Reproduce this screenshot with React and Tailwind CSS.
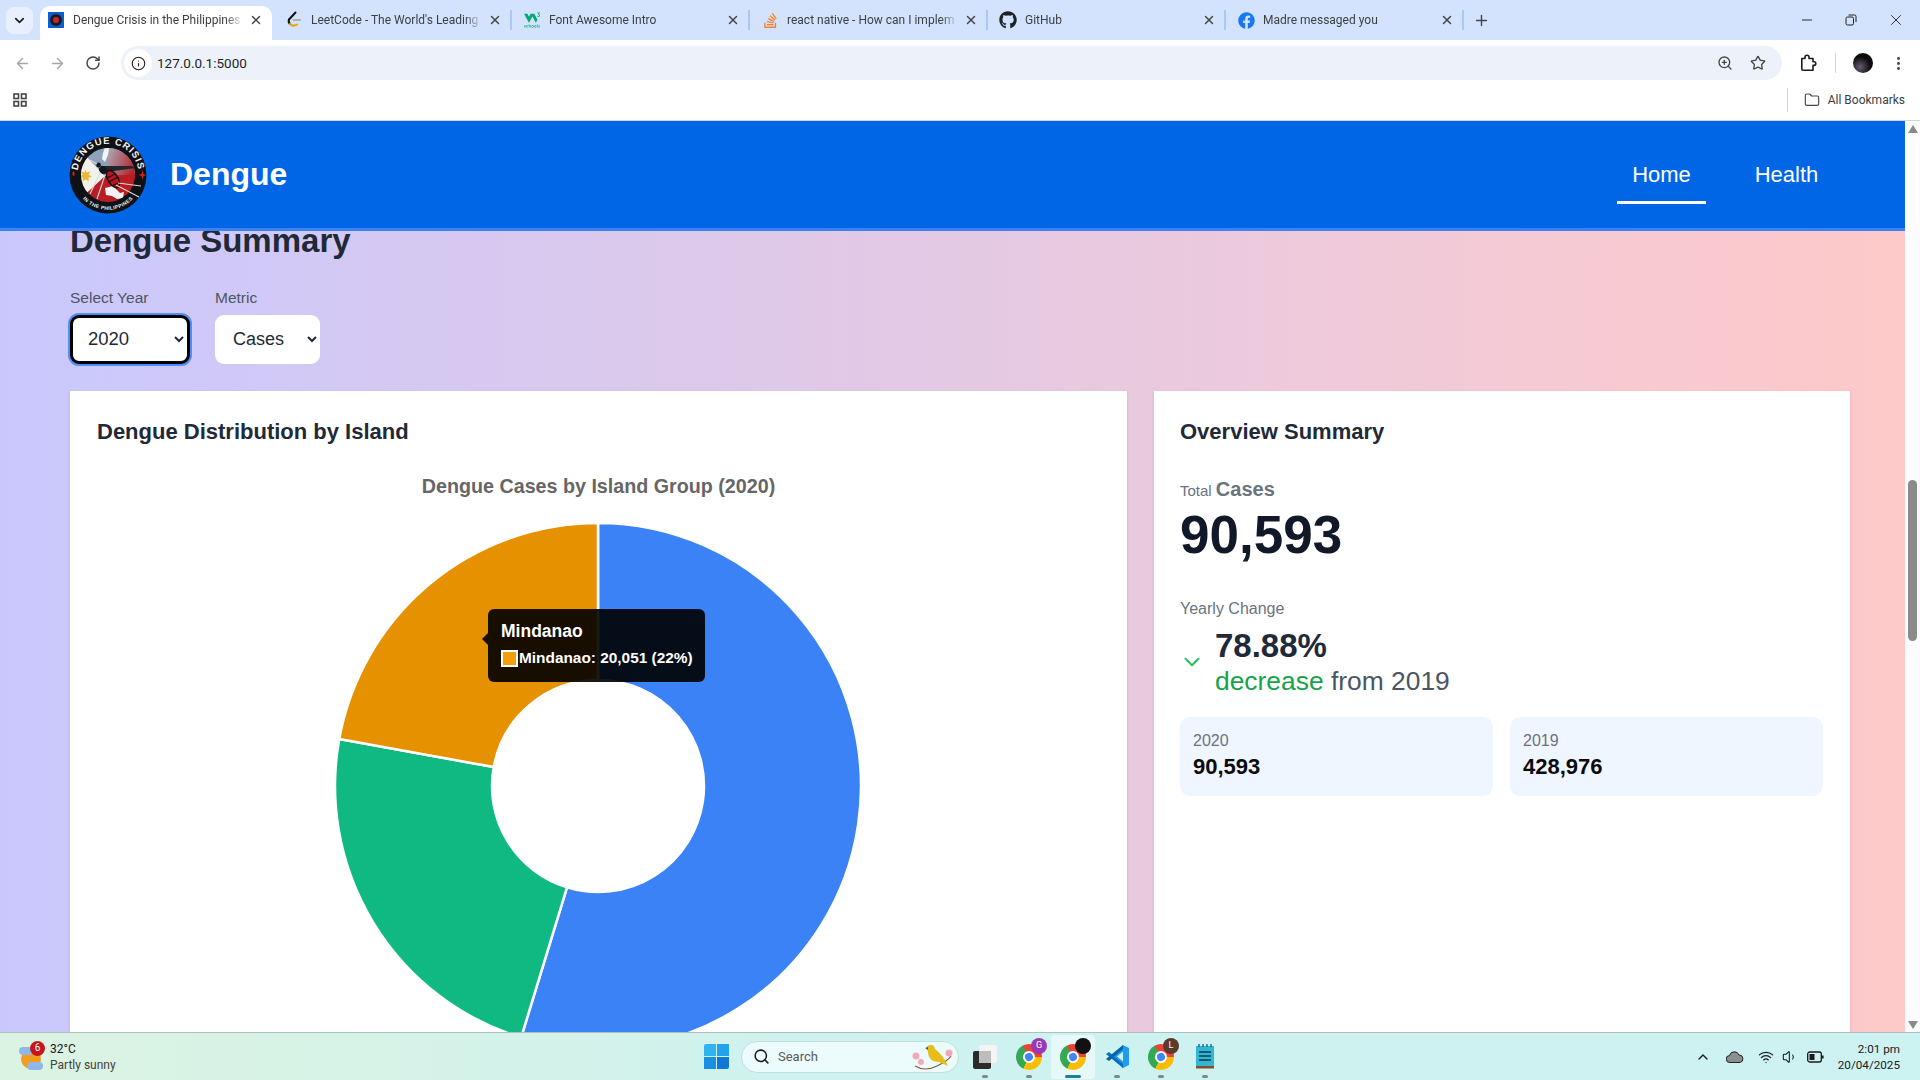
import React from 'react';
import {
  ArrowLeft, ArrowRight, RotateCw, Info, ZoomIn, Star, EllipsisVertical, Folder,
  X, Plus, Minus, ChevronDown, ChevronUp, Search, Wifi, Volume1,
} from 'lucide-react';
import { FaGithub, FaFacebook, FaStackOverflow } from 'react-icons/fa';
import { SiW3Schools } from 'react-icons/si';

const UI_FONT = "font-['Roboto','Noto_Sans',sans-serif]";
const PAGE_FONT = "font-['Liberation_Sans',Arial,sans-serif]";

function LeetIcon() {
  return (
    <svg width="16" height="18" viewBox="0 0 16 18" fill="none" strokeWidth="2" strokeLinecap="round">
      <path d="M9.5 1.5 L3 8.5" stroke="#111" />
      <path d="M3 8.5 Q2 11 4 13" stroke="#111" />
      <path d="M4 13 Q7 16 11 13.5" stroke="#f2a100" />
      <path d="M7.5 9 H14" stroke="#b3b1b0" />
    </svg>
  );
}

function Favicon() {
  return (
    <div className="w-4 h-4 bg-[#0a5fd6] flex items-center justify-center">
      <div className="w-3 h-3 rounded-full bg-[#1c1c1c] flex items-center justify-center">
        <div className="w-1.5 h-1.5 rounded-full bg-[#c1272d]" />
      </div>
    </div>
  );
}

const tabs = [
  { icon: <Favicon />, title: 'Dengue Crisis in the Philippines', active: true },
  { icon: <LeetIcon />, title: "LeetCode - The World's Leading" },
  { icon: <SiW3Schools size={16} className="text-[#04aa6d]" />, title: 'Font Awesome Intro' },
  { icon: <FaStackOverflow size={17} className="text-[#f48024]" />, title: 'react native - How can I implem' },
  { icon: <FaGithub size={18} className="text-[#1f2328]" />, title: 'GitHub' },
  { icon: <FaFacebook size={17} className="text-[#1877f2]" />, title: 'Madre messaged you' },
];

function Tab({ icon, title, active }) {
  return (
    <div className={`h-[34px] shrink-0 flex items-center pl-[7px] pb-[6px] rounded-t-[10px] ${active ? 'w-[232px] mr-[6px] pr-[9px] bg-white' : 'w-[238px] pr-[4px]'}`}>
      <div className="w-[18px] flex justify-center shrink-0">{icon}</div>
      <span className="ml-[8px] flex-1 min-w-0 whitespace-nowrap overflow-hidden text-[12px] text-[#3c4043] [mask-image:linear-gradient(to_right,black_90%,transparent)]">
        {title}
      </span>
      <X size={14} strokeWidth={2.5} className="ml-[6px] shrink-0 text-[#444746]" />
      {!active && <div className="w-[2px] h-[20px] bg-[#a8c7fa] ml-[8px] shrink-0" />}
    </div>
  );
}

function TabStrip() {
  return (
    <div className="h-[40px] bg-[#d3e3fd] flex items-end">
      <div className="w-[27px] h-[27px] ml-[6px] mb-[6px] mr-[7px] rounded-[8px] bg-[#e9f0fd] flex items-center justify-center shrink-0">
        <ChevronDown size={15} strokeWidth={2.8} className="text-[#1f1f1f]" />
      </div>
      {tabs.map((t) => (
        <Tab key={t.title} {...t} />
      ))}
      <Plus size={17} strokeWidth={2} className="ml-[5px] mb-[11px] text-[#444746] shrink-0" />
      <div className="flex-1" />
      <div className="flex items-center gap-[30px] pr-[15px] mb-[11px] text-[#1f1f1f]">
        <Minus size={16} strokeWidth={1.4} />
        <RestoreIcon />
        <X size={18} strokeWidth={1.2} />
      </div>
    </div>
  );
}

function RestoreIcon() {
  return (
    <svg width="12" height="12" viewBox="0 0 12 12" fill="none" stroke="#1f1f1f" strokeWidth="1">
      <rect x="1" y="3" width="7.5" height="8" rx="1.5" />
      <path d="M3.5 1 H9.5 Q11 1 11 2.5 V8" />
    </svg>
  );
}

function ExtensionIcon() {
  return (
    <svg className="ml-[18px]" width="17" height="18" viewBox="0 0 17 18" fill="none" stroke="#1f1f1f" strokeWidth="1.6" strokeLinejoin="round">
      <path d="M1.8 4.5 H5 V3.2 a2 2 0 0 1 4 0 V4.5 H13 V7.8 H14 a1.8 1.8 0 0 1 0 3.6 H13 V16.2 H3 Q1.8 16.2 1.8 15 Z" />
    </svg>
  );
}

function Toolbar() {
  return (
    <div className="h-[40px] pt-[6px] bg-white flex items-center">
      <ArrowLeft size={17} className="ml-[14px] text-[#a3a5a8]" />
      <ArrowRight size={17} className="ml-[18px] text-[#a3a5a8]" />
      <RotateCw size={16} strokeWidth={2.2} className="ml-[19px] text-[#444746]" />
      <div className="ml-[20px] w-[1661px] h-[34px] rounded-full bg-[#edf2fa] flex items-center">
        <div className="ml-[3px] w-[28px] h-[28px] rounded-full bg-white flex items-center justify-center">
          <Info size={15} strokeWidth={1.8} className="text-[#1f1f1f]" />
        </div>
        <span className="ml-[5px] text-[13.5px] text-[#1f1f1f]">127.0.0.1:5000</span>
        <div className="flex-1" />
        <ZoomIn size={16} strokeWidth={2} className="text-[#444746]" />
        <Star size={16} strokeWidth={2} className="ml-[17px] mr-[16px] text-[#444746]" />
      </div>
      <ExtensionIcon />
      <div className="ml-[18px] w-[1px] h-[20px] bg-[#c7d7f0]" />
      <div className="ml-[17px] w-[20px] h-[20px] rounded-full bg-[radial-gradient(circle_at_35%_70%,#6b5a78,#0a0a0a_55%)]" />
      <EllipsisVertical size={17} strokeWidth={2.2} className="ml-[17px] text-[#444746]" />
    </div>
  );
}

function BookmarksBar() {
  return (
    <div className="h-[41px] bg-white flex items-center border-b border-[#d3d3d3] pb-[1px]">
      <AppsIcon />
      <div className="flex-1" />
      <div className="w-[1px] h-[24px] bg-[#c7d7f0]" />
      <Folder size={16} strokeWidth={1.7} className="ml-[16px] text-[#444746]" />
      <span className="ml-[8px] mr-[15px] text-[12px] text-[#3c4043]">All Bookmarks</span>
    </div>
  );
}

function AppsIcon() {
  return (
    <svg className="ml-[13px]" width="14" height="14" viewBox="0 0 14 14" fill="none" stroke="#444746" strokeWidth="1.6">
      <rect x="1" y="1" width="4.5" height="4.5" />
      <rect x="8.5" y="1" width="4.5" height="4.5" />
      <rect x="1" y="8.5" width="4.5" height="4.5" />
      <rect x="8.5" y="8.5" width="4.5" height="4.5" />
    </svg>
  );
}

function Logo() {
  return (
    <svg width="78" height="78" viewBox="0 0 78 78" className="shrink-0">
      <defs>
        <path id="logoTop" d="M9.5 46 A30.5 30.5 0 1 1 68.5 46" />
        <path id="logoBottom" d="M6 48 A34 34 0 0 0 72 48" />
        <clipPath id="logoInner"><circle cx="39" cy="39" r="27" /></clipPath>
        <linearGradient id="logoRed" x1="0" y1="0" x2="1" y2="0.4">
          <stop offset="0" stopColor="#a9aebb" />
          <stop offset="1" stopColor="#b5242c" />
        </linearGradient>
      </defs>
      <circle cx="39" cy="39" r="38.5" fill="#0e1216" />
      <g clipPath="url(#logoInner)">
        <rect x="10" y="10" width="58" height="30" fill="#8fa2bb" />
        <rect x="39" y="10" width="30" height="32" fill="url(#logoRed)" />
        <path d="M8 42 L70 38 V70 H8 Z" fill="#b91c22" />
        <path d="M10 13 L36 40 L10 64 Z" fill="#f1f1ee" />
        <path d="M16 33 l1.6 3.4 3.6 -1 -1.4 3.4 3.2 2 -3.6 1 0.4 3.8 -3.2 -2.4 -3 2.4 0.4 -3.8 -3.4 -1.2 3 -1.8 -1.2 -3.4 3.4 1.2 Z" fill="#e8b92e" />
        <path d="M36 11 l4 1 -1 7 -3 7 -3 -3 1 -6 Z" fill="#f4f4f4" />
        <path d="M36 52 l8 -2 7 7 4 -1 -1 6 -6 1 -5 -3 -6 -1 Z" fill="#f4f4f4" />
      </g>
      <path d="M33 30 L63 30 L66 32 L38 36 Z" fill="#20262c" />
      <ellipse cx="44" cy="43" rx="5" ry="9.5" transform="rotate(-32 44 43)" fill="#c1121f" stroke="#111" strokeWidth="1.4" />
      <path d="M38 42 L46 38 M40 46 L49 41 M43 50 L51 46" stroke="#111" strokeWidth="1.2" />
      <ellipse cx="34" cy="34" rx="3.6" ry="4.4" transform="rotate(-40 34 34)" fill="#15181b" />
      <circle cx="29.5" cy="29" r="2.4" fill="#15181b" />
      <path d="M31 37 L21 58 M36 39 L28 63 M47 49 L70 61 M49 47 L72 50 M28 28 L21 24" stroke="#d8d8d8" strokeWidth="1.1" fill="none" />
      <path d="M4.5 35 q-2.4 3.6 0 5 q2.4 -1.4 0 -5 Z" fill="#d2222a" />
      <path d="M73.5 34 l1 4 3 1 -3 1 -1 4 -1 -4 -3 -1 3 -1 Z" fill="#d2222a" />
      <text fontSize="9.5" fontWeight="700" fill="#f4f4f4" letterSpacing="1" className={PAGE_FONT}>
        <textPath href="#logoTop" startOffset="50%" textAnchor="middle">DENGUE CRISIS</textPath>
      </text>
      <text fontSize="5" fontWeight="700" fill="#f4f4f4" letterSpacing="0.4" className={PAGE_FONT}>
        <textPath href="#logoBottom" startOffset="50%" textAnchor="middle">IN THE PHILIPPINES</textPath>
      </text>
    </svg>
  );
}

function SiteHeader() {
  return (
    <header className="relative z-10 h-[110px] shrink-0 bg-[#0066e6] border-b-[3px] border-[#3b82f6] flex items-center pl-[69px] pr-[78px]">
      <Logo />
      <span className="ml-[23px] mb-[2px] text-[32px] font-bold text-white">Dengue</span>
      <div className="flex-1" />
      <nav className="flex items-center gap-[40px] text-[22px] text-white">
        <span className="w-[89px] text-center pt-[12px] pb-[10px] border-b-[3px] border-white font-medium">Home</span>
        <span className="pt-[12px] pb-[13px] w-[81px] text-center font-medium">Health</span>
      </nav>
    </header>
  );
}

function Field({ label, value, options, width, focused }) {
  return (
    <div className="flex flex-col">
      <label className="text-[15.5px] leading-[20px] text-[#4b5563] mb-[7px]">{label}</label>
      <select
        defaultValue={value}
        className={`${width} h-[49px] pr-[2px] pb-[2px] text-[#1f2937] bg-white rounded-[9px] ${focused ? 'text-[18.5px] pl-[11px] border-[3px] border-black ring-2 ring-[#4f8ef7]' : 'text-[18px] pl-[14px]'}`}
      >
        {options.map((o) => (
          <option key={o}>{o}</option>
        ))}
      </select>
    </div>
  );
}

function arcPath(cx, cy, r0, r1, a0, a1) {
  const p = (r, a) => {
    const t = ((a - 90) * Math.PI) / 180;
    return `${(cx + r * Math.cos(t)).toFixed(2)} ${(cy + r * Math.sin(t)).toFixed(2)}`;
  };
  const large = a1 - a0 > 180 ? 1 : 0;
  return `M${p(r1, a0)} A${r1} ${r1} 0 ${large} 1 ${p(r1, a1)} L${p(r0, a1)} A${r0} ${r0} 0 ${large} 0 ${p(r0, a0)} Z`;
}

const slices = [
  { color: '#3b82f6', from: 0, to: 197 },
  { color: '#10b981', from: 197, to: 280.3 },
  { color: '#e69100', from: 280.3, to: 360 },
];

function DonutChart() {
  return (
    <div className="relative mt-[20px] h-[560px]">
      <svg width="1003" height="560" viewBox="0 0 1003 560">
        {slices.map((s) => (
          <path key={s.color} d={arcPath(501, 268, 106, 263, s.from, s.to)} fill={s.color} stroke="#fff" strokeWidth="2.5" />
        ))}
      </svg>
      <div className="absolute left-[391px] top-[91px] w-[217px] h-[73px] rounded-[6px] bg-black/90 pl-[13px] pt-[11px] text-white">
        <div className="absolute left-[-6px] top-[24px] w-0 h-0 border-y-[6px] border-y-transparent border-r-[6px] border-r-black/90" />
        <div className="text-[17.5px] leading-[22px] font-bold">Mindanao</div>
        <div className="flex items-center mt-[6px] text-[15.4px] leading-[20px] font-bold">
          <span className="w-[17px] h-[17px] border-2 border-white bg-[#f59e0b] mr-[1px] shrink-0" />
          Mindanao: 20,051 (22%)
        </div>
      </div>
    </div>
  );
}

function YearCard({ year, value }) {
  return (
    <div className="h-[79px] rounded-[10px] bg-[#eff6ff] pl-[13px] pt-[14px]">
      <div className="text-[16px] leading-[20px] text-[#6b7280]">{year}</div>
      <div className="mt-[3px] text-[22px] leading-[26px] font-bold text-[#0b0b0b]">{value}</div>
    </div>
  );
}

function Overview() {
  return (
    <section className="bg-white shadow-sm pt-[27px] pl-[26px] pr-[27px] min-h-[900px]">
      <h2 className="text-[22px] leading-[28px] font-bold text-[#1f2937]">Overview Summary</h2>
      <div className="mt-[31px] leading-[24px] text-[#6b7280]">
        <span className="text-[15px]">Total </span>
        <span className="text-[20px] font-semibold">Cases</span>
      </div>
      <div className="mt-[2px] text-[53px] leading-[60px] font-bold text-[#111827]">90,593</div>
      <div className="mt-[34px] text-[16px] leading-[20px] text-[#6b7280]">Yearly Change</div>
      <div className="mt-[8px] flex items-center">
        <ChevronDown size={26} strokeWidth={1.8} className="ml-[-1px] text-[#22c55e] shrink-0" />
        <div className="ml-[10px]">
          <div className="text-[33px] leading-[38px] font-bold text-[#1f2937]">78.88%</div>
          <div className="text-[26.4px] leading-[32px] text-[#4b5563]">
            <span className="text-[#16a34a]">decrease</span> from 2019
          </div>
        </div>
      </div>
      <div className="mt-[20px] grid grid-cols-2 gap-[17px]">
        <YearCard year="2020" value="90,593" />
        <YearCard year="2019" value="428,976" />
      </div>
    </section>
  );
}

function Scrollbar() {
  return (
    <div className="w-[15px] shrink-0 bg-[#fdfdfd] flex flex-col items-center pt-[4px] pb-[3px]">
      <div className="w-0 h-0 border-x-[5px] border-x-transparent border-b-[8px] border-b-[#8a8a8a]" />
      <div className="mt-[347px] w-[9px] h-[161px] rounded-full bg-[#8b8b8b]" />
      <div className="flex-1" />
      <div className="w-0 h-0 border-x-[5px] border-x-transparent border-t-[8px] border-t-[#8a8a8a]" />
    </div>
  );
}

function Page() {
  return (
    <div className={`flex-1 min-h-0 flex ${PAGE_FONT}`}>
      <div className="flex-1 min-w-0 flex flex-col overflow-hidden bg-gradient-to-r from-[#c9c8fd] to-[#fec9c9]">
        <SiteHeader />
        <main className="pl-[70px] pr-[55px] mt-[-10px]">
          <h1 className="text-[33px] leading-[40px] font-bold text-[#1f2937]">Dengue Summary</h1>
          <div className="mt-[27px] flex gap-[25px]">
            <Field label="Select Year" value="2020" options={['2020', '2019']} width="w-[120px]" focused />
            <Field label="Metric" value="Cases" options={['Cases', 'Deaths']} width="w-[105px]" />
          </div>
          <div className="mt-[27px] grid grid-cols-[1057px_696px] gap-[27px]">
            <section className="bg-white shadow-sm pt-[27px] px-[27px] min-h-[900px]">
              <h2 className="text-[22px] leading-[28px] font-bold text-[#1f2937]">Dengue Distribution by Island</h2>
              <div className="mt-[28px] text-center text-[19.7px] leading-[24px] font-bold text-[#666666]">
                Dengue Cases by Island Group (2020)
              </div>
              <DonutChart />
            </section>
            <Overview />
          </div>
        </main>
      </div>
      <Scrollbar />
    </div>
  );
}

function ChromeIcon({ badge, badgeClass, avatar }) {
  return (
    <div className="relative w-[26px] h-[26px]">
      <div className="w-[26px] h-[26px] rounded-full bg-[conic-gradient(#ea4335_0_33%,#fbbc04_33%_66%,#34a853_66%_100%)] flex items-center justify-center [transform:rotate(-30deg)]">
        <div className="w-[12px] h-[12px] rounded-full bg-[#4285f4] border-2 border-white" />
      </div>
      {badge && (
        <div className={`absolute top-[-6px] right-[-5px] w-[16px] h-[16px] rounded-full flex items-center justify-center text-[9px] leading-none text-white ${badgeClass}`}>
          {badge}
        </div>
      )}
      {avatar && <div className="absolute top-[-6px] right-[-5px] w-[16px] h-[16px] rounded-full bg-[#111]" />}
    </div>
  );
}

function TaskSlot({ children, active }) {
  return (
    <div className={`relative w-[44px] h-[44px] flex items-center justify-center rounded-[4px] ${active ? 'bg-[#e6f8f8]' : ''}`}>
      {children}
      <div className={`absolute bottom-[1px] h-[3px] rounded-full ${active ? 'w-[16px] bg-[#1f7f96]' : 'w-[6px] bg-[#7b8a8a]'}`} />
    </div>
  );
}

function Bird() {
  return (
    <svg width="44" height="30" viewBox="0 0 44 30">
      <path d="M4 24 Q14 30 26 24 T40 14" stroke="#8b5a3c" strokeWidth="1.2" fill="none" />
      <circle cx="5" cy="14" r="3.5" fill="#f4a9b8" />
      <circle cx="10" cy="20" r="3" fill="#f4a9b8" />
      <circle cx="38" cy="11" r="3.5" fill="#f4a9b8" />
      <path d="M16 4 Q23 1 24 7 Q32 13 37 24 L28 20 Q18 20 17 11 Z" fill="#e6bd1a" />
      <path d="M14 6 L17 5 L17 8 Z" fill="#555" />
    </svg>
  );
}

function Taskbar() {
  return (
    <div className={`h-[48px] shrink-0 border-t border-[#aebfbf] bg-gradient-to-r from-[#dbf3e2] via-[#cdf2f0] to-[#cdf2f2] flex items-center ${UI_FONT}`}>
      <div className="relative ml-[19px] w-[24px] h-[30px]">
        <div className="absolute left-[2px] top-[7px] w-[20px] h-[20px] rounded-full bg-[#f39c1f]" />
        <div className="absolute left-[8px] top-[20px] w-[16px] h-[8px] rounded-full bg-[#8fb7e8]" />
        <div className="absolute left-0 top-[5px] w-[14px] h-[8px] rounded-full bg-[#8fb7e8]" />
        <div className="absolute left-[11px] top-[-1px] w-[15px] h-[15px] rounded-full bg-[#c4161c] flex items-center justify-center text-[10px] leading-none text-white">6</div>
      </div>
      <div className="ml-[7px] w-[110px]">
        <div className="text-[12px] leading-[16px] text-[#1a1a1a]">32°C</div>
        <div className="text-[12px] leading-[16px] text-[#444]">Partly sunny</div>
      </div>
      <div className="ml-[544px] grid grid-cols-2 gap-[1px] w-[25px]">
        <div className="h-[12px] bg-[#2fb4ef] rounded-tl-[2px]" />
        <div className="h-[12px] bg-[#20a3ec]" />
        <div className="h-[12px] bg-[#1a8fe3]" />
        <div className="h-[12px] bg-[#0f78d4] rounded-br-[2px]" />
      </div>
      <div className="ml-[12px] w-[218px] h-[32px] rounded-full bg-[#ecfbfb] border border-[#bfe0e0] flex items-center pl-[11px] pr-[3px]">
        <Search size={17} strokeWidth={2.2} className="text-[#1a1a1a]" />
        <span className="ml-[8px] text-[13px] text-[#5a5a5a]">Search</span>
        <div className="flex-1" />
        <Bird />
      </div>
      <div className="ml-[4px] flex items-center">
        <TaskSlot>
          <div className="relative w-[24px] h-[24px]">
            <div className="absolute right-0 top-0 w-[18px] h-[18px] bg-[#f4f4f4] rounded-[2px]" />
            <div className="absolute left-0 bottom-0 w-[18px] h-[18px] bg-[#2a2a2a] rounded-[2px]" />
            <div className="absolute left-[6px] top-[6px] w-[12px] h-[12px] bg-[#bdbdbd]" />
          </div>
        </TaskSlot>
        <TaskSlot><ChromeIcon badge="G" badgeClass="bg-[#9c36b5]" /></TaskSlot>
        <TaskSlot active><ChromeIcon avatar /></TaskSlot>
        <TaskSlot>
          <svg width="25" height="25" viewBox="0 0 25 25">
            <path d="M18 1 L24 4 V21 L18 24 L7 13 Z M18 7.5 L12 12.5 L18 17.5 Z" fill="#1f9cf0" fillRule="evenodd" />
            <path d="M4 8 L18 20 V24 L1 10 Z" fill="#0a6fc2" />
            <path d="M1 15 L18 1 V5 L4 17 Z" fill="#0065a9" />
          </svg>
        </TaskSlot>
        <TaskSlot><ChromeIcon badge="L" badgeClass="bg-[#5d3a2e]" /></TaskSlot>
        <TaskSlot>
          <svg width="20" height="26" viewBox="0 0 20 26">
            <rect x="1" y="2" width="18" height="22" fill="#35b5d6" />
            <rect x="1" y="22" width="18" height="2.5" fill="#8a4b25" />
            <path d="M4 0 V3 M8 0 V3 M12 0 V3 M16 0 V3" stroke="#146a80" strokeWidth="1.4" />
            <path d="M4 8 H16 M4 12 H16 M4 16 H16" stroke="#0e5d73" strokeWidth="1.8" />
          </svg>
        </TaskSlot>
      </div>
      <div className="flex-1" />
      <div className="flex items-center text-[#1a1a1a]">
        <ChevronUp size={16} strokeWidth={2} />
        <svg className="ml-[15px]" width="18" height="12" viewBox="0 0 18 12">
          <path d="M4 11.5 a3.5 3.5 0 0 1 -0.5 -7 a5 5 0 0 1 9.5 -0.5 a3.8 3.8 0 0 1 1 7.5 Z" fill="#8a8f8f" stroke="#222" strokeWidth="1" />
        </svg>
        <Wifi size={16} strokeWidth={1.8} className="ml-[14px]" />
        <Volume1 size={16} strokeWidth={1.6} className="ml-[8px]" />
        <svg className="ml-[9px]" width="17" height="12" viewBox="0 0 17 12" fill="none">
          <rect x="0.7" y="1" width="13.6" height="10" rx="2" stroke="#1a1a1a" strokeWidth="1.3" />
          <rect x="2.5" y="3" width="5" height="6" fill="#1a1a1a" />
          <rect x="15" y="4.5" width="1.6" height="3" fill="#1a1a1a" />
        </svg>
      </div>
      <div className="ml-[14px] mr-[20px] text-right text-[11.7px] leading-[16px] text-[#1a1a1a]">
        <div>2:01 pm</div>
        <div>20/04/2025</div>
      </div>
    </div>
  );
}

export default function App() {
  return (
    <div className={`h-screen flex flex-col overflow-hidden bg-white ${UI_FONT}`}>
      <TabStrip />
      <Toolbar />
      <BookmarksBar />
      <Page />
      <Taskbar />
    </div>
  );
}
